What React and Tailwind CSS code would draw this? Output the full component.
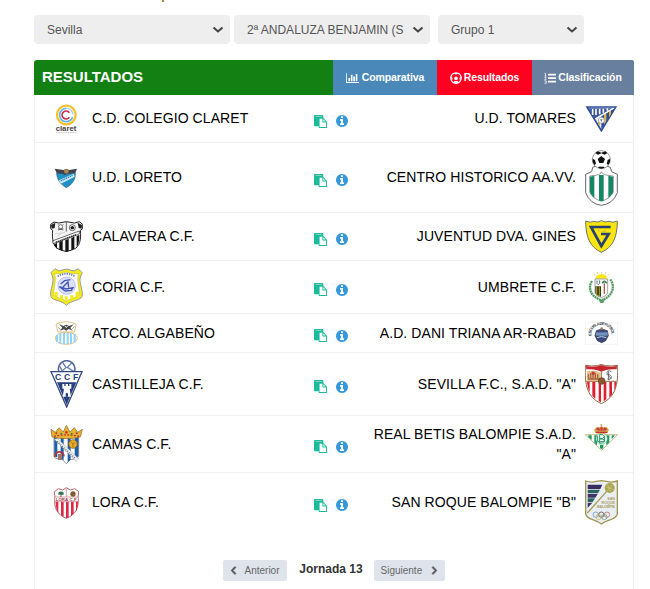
import React, { useState } from 'react';
import { FaChevronLeft, FaChevronRight } from 'react-icons/fa';

function Claret() {
  return (
    <svg width="33" height="30" viewBox="0 0 99 90">
      <g fill="none">
        <circle cx="49" cy="33" r="28" stroke="#f5c331" strokeWidth="7" />
        <path d="M49 13a20 20 0 1 0 19 26" stroke="#62b5e8" strokeWidth="5" />
        <path d="M49 13a20 20 0 0 1 20 18" stroke="#a8cfe8" strokeWidth="4" />
        <path d="M58 26a12 12 0 1 0 0 14" stroke="#c82f50" strokeWidth="5" />
      </g>
      <text x="17" y="80" fontSize="22" fontWeight="bold" fill="#4a3c42" textLength="62" lengthAdjust="spacingAndGlyphs" fontFamily="Liberation Sans">claret</text>
      <path d="M18 86h61" stroke="#aaa" strokeWidth="2" strokeDasharray="5 2" />
    </svg>
  );
}

function Loreto() {
  return (
    <svg width="33" height="20" viewBox="0 0 99 60">
      <path d="M20 15h56c1 20-9 34-27 44C31 49 20 33 20 15z" fill="#1e91c8" stroke="#356178" strokeWidth="2" />
      <path d="M14 2l27 4 8-4 8 4 24-4-5 13-24 3-7 4-7-4-18-3z" fill="#41434d" />
      <circle cx="49" cy="10" r="7" fill="#ab8554" />
      <path d="M27 37l44-20 3 9-42 21z" fill="#d4edf7" />
      <path d="M32 39l36-17" stroke="#2384b4" strokeWidth="4" strokeDasharray="4 2" />
    </svg>
  );
}

function Calavera() {
  return (
    <svg width="33" height="31" viewBox="0 0 99 93">
      <path d="M8 28l-6-5V10l10-7 14 3 23-4 24 4 15-4 10 8v13l-7 5c3 28-2 50-20 57l-22 7-22-7C10 78 5 55 8 28z" fill="#f5f5f5" stroke="#222" strokeWidth="3" />
      <path d="M3 12l13-7-2 16-9 2zM96 12L83 5l3 16 9 2z" fill="#222" />
      <path d="M49 3v29" stroke="#222" strokeWidth="2" />
      <path d="M9 59l79-29v9L9 68z" fill="#fff" stroke="#222" strokeWidth="2" />
      <path d="M18 64l61-23" stroke="#333" strokeWidth="5" strokeDasharray="4 2" />
      <path d="M13 69l8-3v17l-7-7zM28 63l10-4v31l-10-5zM46 57l10-3v36l-7 2-3-1zM64 51l9-4v36l-9 4zM80 45l8-3c0 18-2 29-8 36z" fill="#111" />
      <circle cx="67" cy="20" r="9" fill="#fff" stroke="#222" strokeWidth="2" />
      <path d="M67 14l6 5-2 6h-8l-2-6z" fill="#222" />
      <circle cx="32" cy="17" r="6" fill="#fff" stroke="#333" strokeWidth="2" />
      <path d="M24 10l3 3M40 10l-3 3M24 27l16-4M24 23l16 4" stroke="#555" strokeWidth="2.500" />
      <path d="M15 38l30-3M20 47l12-8" stroke="#bbb" strokeWidth="2" />
    </svg>
  );
}

function Coria() {
  return (
    <svg width="33" height="38" viewBox="0 0 99 114">
      <path d="M3 14L15 2l12 7 22-6 23 6 12-7 13 12-6 13c-5 18 10 41 5 58-4 13-31 10-47 27C34 95 6 99 3 85-2 67 13 45 8 27z" fill="#f2ec15" stroke="#9a9aa3" strokeWidth="3" />
      <path d="M14 17l13 1 22-5 23 5 13-1c-5 21 3 41 3 61-4 12-27 10-39 23C38 89 14 91 11 78c0-20 9-40 3-61z" fill="#fff" stroke="#b0aa60" strokeWidth="1.500" />
      <path d="M14 72h9v17l-9-6zM30 82h9v14l-9-4zM45 85h8v12l-4 3-4-3zM61 82h9v9l-9 4zM77 71h9v12l-9 5z" fill="#f2e915" />
      <circle cx="50" cy="53" r="26" fill="#dce3fa" stroke="#9da9e6" strokeWidth="2" />
      <path d="M28 56l21 7 20-4-5 8-18 2zM39 57l15-15 2 16M32 48l12-10 17-3" fill="none" stroke="#4454b6" strokeWidth="4" />
      <path d="M23 25q27-15 51 0" fill="none" stroke="#6573be" strokeWidth="5" strokeDasharray="4 3" />
    </svg>
  );
}

function Algabeno() {
  return (
    <svg width="33" height="24" viewBox="0 0 99 72">
      <path d="M18 10l13-5 18-3 18 3 12 5-6 23H24z" fill="#fff" stroke="#d8b268" strokeWidth="2.500" />
      <ellipse cx="49" cy="52" rx="33" ry="18" fill="#fff" stroke="#d8b268" strokeWidth="2.500" />
      <path d="M21 42v21M31 37v31M42 35v34M53 35v34M63 37v31M74 40v24" stroke="#8fd3f5" strokeWidth="6" />
      <path d="M27 9l13 6 9-4 8 4 14-5-10 10 7 9-12-5-7 5-7-4-13 4 8-9z" fill="#444" />
      <path d="M45 15l4 5 4-6" stroke="#eee" strokeWidth="3" fill="none" />
      <path d="M24 19l7 6M74 16l-8 8" stroke="#c9a38d" strokeWidth="3" />
    </svg>
  );
}

function Castilleja() {
  return (
    <svg width="33" height="48" viewBox="0 0 99 144">
      <circle cx="50" cy="27" r="25" fill="#fff" stroke="#55699c" strokeWidth="5" />
      <path d="M38 7l10 16-15 12M65 9L52 22l19 12M46 22h9M28 17l10 17" fill="none" stroke="#6c80ad" strokeWidth="4" />
      <path d="M3 35h93L50 141z" fill="#fff" stroke="#31477f" strokeWidth="4" />
      <path d="M21 67h58l-29 67z" fill="#263f7d" />
      <text x="15" y="61" fontSize="26" fontWeight="bold" fill="#263f7d" textLength="70" fontFamily="Liberation Sans">CCF</text>
      <path d="M37 72h6v6h4v-6h7v6h4v-6h6v14h-5l4 24H38l4-24h-5z" fill="#fff" />
      <path d="M47 110v-9q3-6 7 0v9z" fill="#263f7d" />
    </svg>
  );
}

function Camas() {
  return (
    <svg width="33" height="39" viewBox="0 0 99 117">
      <path d="M12 37h74v55c0 10-16 10-25 12l-12 12-12-12c-9-3-25-1-25-12z" fill="#fff" stroke="#555" strokeWidth="2" />
      <path d="M13 38h9v60l-9-6zM32 38h9v67l-9-3zM53 38h9v66l-9 7zM74 38h11v55q-3 6-11 7z" fill="#195fa9" />
      <path d="M13 43l9-3 64 61-8 8z" fill="#eee" stroke="#777" />
      <path d="M21 49l55 52" stroke="#777" strokeWidth="5" strokeDasharray="3 4" />
      <path d="M6 36L3 13l13 9 11-14 13 13 9-20 11 20L73 8l10 14 14-9-6 23q-41 10-85 0z" fill="#e5b333" stroke="#87621d" strokeWidth="2" />
      <path d="M12 34q37-9 76 0" fill="none" stroke="#bd3434" strokeWidth="4" strokeDasharray="6 4" />
      <circle cx="19" cy="25" r="3" fill="#c9302c" />
      <circle cx="49" cy="22" r="4" fill="#c9302c" />
      <circle cx="80" cy="25" r="3" fill="#c9302c" />
      <circle cx="34" cy="26" r="3" fill="#3a8a50" />
      <circle cx="65" cy="26" r="3" fill="#3a8a50" />
      <circle cx="69" cy="57" r="13" fill="#e9aa2a" stroke="#775519" strokeWidth="2" />
      <path d="M62 50l7 7 7-5M69 57v10" fill="none" stroke="#8d6118" strokeWidth="2" />
      <path d="M15 96c-1-19 26-21 27-2" fill="none" stroke="#bd2f3b" strokeWidth="5" />
      <path d="M24 87h12v18H24z" fill="#a07868" />
    </svg>
  );
}

function Lora() {
  return (
    <svg width="33" height="32" viewBox="0 0 99 96">
      <path d="M13 14l12-9 13 4 11-7 12 7 13-4 12 9-2 17c4 31-8 53-35 63C22 84 10 61 15 31z" fill="#fff" stroke="#b7686d" strokeWidth="3" />
      <path d="M17 43h8v34q-8-9-8-34zM33 43h8v47l-8-6zM48 43h8v48l-8 3zM63 43h8v37l-8 7zM78 43h6q0 22-6 30z" fill="#dc2945" />
      <path d="M14 30h71v14H14z" fill="#fff" stroke="#c47078" strokeWidth="2" />
      <text x="17" y="42" fontSize="13" fontWeight="bold" fill="#9c3444" textLength="65" fontFamily="Liberation Sans">LORA C.F.</text>
      <path d="M49 4v26" stroke="#c77b80" strokeWidth="2" />
      <path d="M25 17q8-7 16 0v6H25z" fill="#2c7652" />
      <path d="M33 20v10" stroke="#77543a" strokeWidth="3" />
      <circle cx="69" cy="21" r="8" fill="#835a30" />
    </svg>
  );
}

function Tomares() {
  return (
    <svg width="33" height="26" viewBox="0 0 99 78">
      <path d="M6 3h86L49 74z" fill="#e9edf4" stroke="#2d4b96" strokeWidth="5" />
      <path d="M89 6L61 52V24zM49 31l9-6v31l-9 14z" fill="#2f4b9b" />
      <path d="M72 16l6-4v12l-6 10zM58 26l6-4v23l-6 10zM39 39h6v22l-6-8z" fill="#dfb537" />
      <path d="M11 7h70L28 38z" fill="#3a559c" />
      <path d="M23 9v18M33 9v18M44 8v17M55 8v12M67 7v7" stroke="#fff" strokeWidth="5" />
      <path d="M30 39L88 6" stroke="#fff" strokeWidth="3" />
      <circle cx="49" cy="43" r="9" fill="#fff" stroke="#8192b3" strokeWidth="2" />
      <path d="M45 40h8l-4 8z" fill="#6175a2" />
    </svg>
  );
}

function CentroHistorico() {
  return (
    <svg width="33" height="56" viewBox="0 0 99 168">
      <path d="M2 73l18-8 3-13q26-13 53 0l4 13 17 8v55q-13 34-48 38Q15 162 2 128z" fill="#fff" stroke="#666" strokeWidth="3" />
      <path d="M14 78q36-2 35-13 3 11 36 13v48q-11 22-36 27-25-5-35-27z" fill="#fff" stroke="#666" strokeWidth="2" />
      <path d="M15 80l13-3v67q-9-7-13-17zM42 75h14v77l-7 2-7-2zM70 77l14 3v47q-4 10-14 17z" fill="#158764" />
      <circle cx="49" cy="29" r="27" fill="#fff" stroke="#666" strokeWidth="2" />
      <path d="M49 18l11 9-5 12H43l-5-12zM38 4l11 4 12-4 6 5-8 5-10-4-10 4-8-5zM23 26l7 4 3 11-5 4-5-9zM75 26l-7 4-3 11 5 4 5-9zM41 50h16l2 3-10 3-10-3z" fill="#111" />
    </svg>
  );
}

function Gines() {
  return (
    <svg width="33" height="33" viewBox="0 0 99 99">
      <path d="M2 3q14 7 24 1 13 5 23-2 10 7 23 2 11 6 25-1c0 50-14 79-48 94C15 81 2 52 2 3z" fill="#f9e50b" stroke="#6c7469" strokeWidth="3" />
      <path d="M77 21H18l31 57 22-36H48" fill="none" stroke="#2a426f" strokeWidth="8" />
      <path d="M41 35v-6M51 35h9v-6" stroke="#b6ad4d" strokeWidth="2" fill="none" />
    </svg>
  );
}

function Umbrete() {
  return (
    <svg width="33" height="31" viewBox="0 0 99 93">
      <path d="M31 20q2-13 19-14 15 1 17 14z" fill="#f8e616" />
      <path d="M30 11l-4-6M39 6l-2-6M50 4v-4M60 6l3-6M68 11l5-5" stroke="#e5bd49" strokeWidth="2" />
      <path d="M21 27C8 48 16 73 48 84M76 22C92 45 82 73 51 84M45 91l13-9M56 91L42 82" fill="none" stroke="#579b66" strokeWidth="7" strokeDasharray="6 1.500" />
      <path d="M30 21h38v43q-4 9-19 13-15-4-19-13z" fill="#fff" stroke="#777" strokeWidth="2" />
      <path d="M31 43h17v31q-17-4-17-13z" fill="#3c3b16" />
      <path d="M35 43v27M43 43v31" stroke="#ada629" strokeWidth="3" />
      <path d="M36 25v9q4 8 8 0v-9" fill="none" stroke="#557184" strokeWidth="3" />
      <path d="M58 34v31" stroke="#b35e42" strokeWidth="4" />
      <path d="M51 33l7-5 8 5" fill="none" stroke="#488352" strokeWidth="5" />
    </svg>
  );
}

function Triana() {
  return (
    <svg width="33" height="23" viewBox="0 0 99 69">
      <path d="M1 1h97v66H1z" fill="#fff" stroke="#eee" strokeWidth="2" />
      <path id="triana-arc" d="M20 41C12-2 86-2 79 41" fill="none" />
      <text fontSize="12" fontWeight="bold" fill="#333746" fontFamily="Liberation Sans">
        <textPath href="#triana-arc" textLength="98">ESCUELA DE FUTBOL</textPath>
      </text>
      <path d="M34 26l16-5 17 5 3 15-8 15-12 6-13-6-7-15z" fill="#3b4b7b" stroke="#262b3c" strokeWidth="2" />
      <path d="M33 31h35v10H33z" fill="#7293bd" />
      <path d="M36 47q14-7 28 0" fill="none" stroke="#b7c8e4" strokeWidth="3" />
      <circle cx="50" cy="20" r="4" fill="#9e8064" />
    </svg>
  );
}

function Sevilla() {
  return (
    <svg width="33" height="40" viewBox="0 0 99 120">
      <path d="M1 4l18 2 19-1 11-4 12 4 19 1 18-2c2 60-7 95-49 115C6 99-1 64 1 4z" fill="#fff" stroke="#8f6238" strokeWidth="3" />
      <path d="M3 6l17 2 18-1 11-4 12 4 19 1 16-2-1 10q-20-2-34 3l-12 4-12-4q-14-5-33-3z" fill="#c72430" />
      <path d="M49 20v33M3 52h91" stroke="#9c6b43" strokeWidth="3" />
      <path d="M6 22q20-4 33 1l8 3v25H7z" fill="#e6bc87" />
      <path d="M10 46V31M17 46V27M24 46V22M31 46V27M38 46V31M9 45h35" fill="none" stroke="#a8613e" strokeWidth="4" />
      <path d="M20 24h9v8h-9z" fill="#c23c3c" />
      <path d="M6 54h8v31q-6-11-8-31zM22 54h9v51l-9-10zM41 54h7v61l-7-4zM56 54h8v52l-8 6zM73 54h8v38l-8 8zM88 54h6q-1 16-6 25z" fill="#df1f30" />
      <path d="M79 23c-14-9-17 6-7 9 13 4 7 17-5 13M71 22v27M64 29l15 15" fill="none" stroke="#555" strokeWidth="2.500" />
      <circle cx="50" cy="51" r="10" fill="#8f5830" stroke="#5b3b27" strokeWidth="2" />
    </svg>
  );
}

function Betis() {
  return (
    <svg width="33" height="27" viewBox="0 0 99 81">
      <path d="M1 32h97L50 79z" fill="#fff" stroke="#beaf68" strokeWidth="2.500" />
      <path d="M10 34h10v14L10 39zM28 34h8v30l-8-8zM64 34h9v21l-9 9zM80 34h10l-10 12zM45 63h10v9l-5 4-5-4z" fill="#199a63" />
      <circle cx="50" cy="44" r="17" fill="#fff" stroke="#66ad85" strokeWidth="2" />
      <path d="M44 31v27M44 32h9q9 5 0 12h-9M44 45h10q9 6-2 12h-8M38 36v17h21V35" fill="none" stroke="#239b67" strokeWidth="3" />
      <path d="M31 27l-4-10 8-8 10 1 4-4 5 4 11-1 7 8-5 10q-17 6-36 0z" fill="#d4aa47" />
      <path d="M33 18q3-11 10-6l2 8M66 18q-3-11-10-6l-2 8M46 10h7v10h-7z" fill="#c93745" />
      <path d="M33 25h34" stroke="#bb3540" strokeWidth="4" />
      <path d="M49 0v8M46 3h7" stroke="#bb8b48" strokeWidth="2" />
    </svg>
  );
}

function SanRoque() {
  return (
    <svg width="33" height="45" viewBox="0 0 99 135">
      <path d="M2 3q16 6 32 1l15-2 16 2q15 5 32-1v98c0 17-32 19-48 31C32 118 2 117 2 101z" fill="#e8eef2" stroke="#a29653" strokeWidth="4" />
      <path d="M8 14h44l-6 13H8z" fill="#382d63" />
      <path d="M8 29h37l-6 11H8z" fill="#2f635f" />
      <path d="M8 42h30l-7 11H8z" fill="#3c3567" />
      <path d="M8 55h22l-7 11H8z" fill="#2f635f" />
      <path d="M8 68h14L8 84z" fill="#3c3567" />
      <path d="M7 99l60-67" stroke="#aa9b55" strokeWidth="4" />
      <circle cx="74" cy="24" r="15" fill="#aaa34f" />
      <path d="M62 20l24 9M67 12l11 25M83 14L65 34" stroke="#d0cb86" strokeWidth="2" />
      <g fill="#b09d60" fontFamily="Liberation Sans" fontSize="11" fontWeight="bold" textAnchor="end">
        <text x="90" y="61">SAN</text>
        <text x="90" y="72">ROQUE</text>
        <text x="90" y="83" textLength="54">BALOMPIE</text>
      </g>
      <g fill="none" strokeWidth="2.500">
        <circle cx="32" cy="104" r="8" stroke="#6c9bc2" />
        <circle cx="49" cy="104" r="8" stroke="#555" />
        <circle cx="66" cy="104" r="8" stroke="#c77474" />
        <circle cx="41" cy="111" r="8" stroke="#cfb663" />
        <circle cx="58" cy="111" r="8" stroke="#78a681" />
      </g>
    </svg>
  );
}

const matches = [
  { home: 'C.D. COLEGIO CLARET', away: 'U.D. TOMARES', homeLogo: <Claret />, awayLogo: <Tomares />, height: 'h-12' },
  { home: 'U.D. LORETO', away: 'CENTRO HISTORICO AA.VV.', homeLogo: <Loreto />, awayLogo: <CentroHistorico />, height: 'h-[70px]' },
  { home: 'CALAVERA C.F.', away: 'JUVENTUD DVA. GINES', homeLogo: <Calavera />, awayLogo: <Gines />, height: 'h-12' },
  { home: 'CORIA C.F.', away: 'UMBRETE C.F.', homeLogo: <Coria />, awayLogo: <Umbrete />, height: 'h-[53px]' },
  { home: 'ATCO. ALGABEÑO', away: 'A.D. DANI TRIANA AR-RABAD', homeLogo: <Algabeno />, awayLogo: <Triana />, height: 'h-[39px]' },
  { home: 'CASTILLEJA C.F.', away: 'SEVILLA F.C., S.A.D. "A"', homeLogo: <Castilleja />, awayLogo: <Sevilla />, height: 'h-[63px]' },
  { home: 'CAMAS C.F.', away: 'REAL BETIS BALOMPIE S.A.D. "A"', homeLogo: <Camas />, awayLogo: <Betis />, height: 'h-[57px]', top: true },
  { home: 'LORA C.F.', away: 'SAN ROQUE BALOMPIE "B"', homeLogo: <Lora />, awayLogo: <SanRoque />, height: 'h-[59px]' },
];

function ChartIcon() {
  return (
    <svg width="13" height="12" viewBox="0 0 2048 1792" fill="currentColor">
      <path d="M640 896v512h-256v-512h256zm384-512v1024h-256v-1024h256zm1024 1152v128h-2048v-1536h128v1408h1920zm-640-896v768h-256v-768h256zm384-384v1152h-256v-1152h256z" />
    </svg>
  );
}

function BallIcon() {
  return (
    <svg width="12" height="12" viewBox="0 0 24 24" fill="none">
      <circle cx="12" cy="12" r="10.500" stroke="currentColor" strokeWidth="2.500" />
      <path d="M12 8.500l4 3-1.500 4.500h-5L8 11.500zM7 2l5 3.500L17 2zM1 9l4.500 3L4 17zM23 9l-4.500 3 1.500 5zM7 21l2-3h6l2 3-5 2z" fill="currentColor" />
    </svg>
  );
}

function ListIcon() {
  return (
    <svg width="12" height="12" viewBox="0 0 24 24" fill="none" stroke="currentColor">
      <path d="M8 5h16M8 12h16M8 19h16" strokeWidth="3.500" />
      <path d="M1 2.500h2v6M1 8h4M1 11h3v2l-3 2.500h4M1 18h3.500v4.500H1" strokeWidth="1.500" />
    </svg>
  );
}

function PasteIcon() {
  return (
    <svg width="13" height="13" viewBox="0 0 1792 1792" fill="#1abc9c">
      <path d="M256 128h768v128H256z" fill="#a9cfc0" />
      <path d="M768 1664h896v-640h-416q-40 0-68-28t-28-68v-416h-384v1152z" fill="#fff" />
      <path d="M768 1664h896v-640h-416q-40 0-68-28t-28-68v-416h-384v1152zm256-1440v-64q0-13-9.500-22.500t-22.500-9.500h-704q-13 0-22.500 9.500t-9.500 22.500v64q0 13 9.500 22.500t22.500 9.500h704q13 0 22.500-9.500t9.500-22.500zm256 672h299l-299-299v299zm512 128v672q0 40-28 68t-68 28h-960q-40 0-68-28t-28-68v-160h-544q-40 0-68-28t-28-68v-1344q0-40 28-68t68-28h1088q40 0 68 28t28 68v328q21 13 36 28l408 408q28 28 48 76t20 88z" />
    </svg>
  );
}

function InfoIcon() {
  return (
    <svg width="14" height="14" viewBox="0 0 1792 1792" fill="#3498db">
      <path d="M1152 1376v-160q0-14-9-23t-23-9h-96v-512q0-14-9-23t-23-9h-320q-14 0-23 9t-9 23v160q0 14 9 23t23 9h96v320h-96q-14 0-23 9t-9 23v160q0 14 9 23t23 9h448q14 0 23-9t9-23zm-128-896v-160q0-14-9-23t-23-9h-192q-14 0-23 9t-9 23v160q0 14 9 23t23 9h192q14 0 23-9t9-23zm640 416q0 209-103 385.500t-279.500 279.500-385.500 103-385.500-103-279.500-279.500-103-385.500 103-385.500 279.500-279.500 385.500-103 385.500 103 279.500 279.500 103 385.500z" />
    </svg>
  );
}

function Filter({ label, className }) {
  return (
    <button className={`flex h-[29px] items-center justify-between rounded bg-[#eeeeee] pl-[13px] pr-[6px] text-[12px] text-[#555] ${className}`}>
      <span className="whitespace-nowrap">{label}</span>
      <svg width="12" height="8" viewBox="0 0 12 8" fill="none" className="shrink-0">
        <path d="M1.500 1.500L6 5.500l4.500-4" stroke="#444" strokeWidth="2" />
      </svg>
    </button>
  );
}

function MatchRow({ match, last }) {
  return (
    <div className={`flex items-center ${match.height} ${last ? '' : 'border-b border-[#f0f0f0]'}`}>
      <div className="ml-[15px] w-[33px] shrink-0">{match.homeLogo}</div>
      <span className="ml-[9px] w-[222px] shrink-0 pb-px tracking-[0.08px]">{match.home}</span>
      <div className="flex w-[35px] shrink-0 items-center justify-between pt-[5px]">
        <PasteIcon />
        <InfoIcon />
      </div>
      <span className="ml-[17px] w-[210px] shrink-0 pb-px text-right tracking-[0.08px]">{match.away}</span>
      <div className={`ml-[9px] w-[33px] shrink-0 ${match.top ? 'self-start pt-2' : ''}`}>{match.awayLogo}</div>
    </div>
  );
}

export default function App() {
  const [jornada, setJornada] = useState(13);

  return (
    <div className="h-[589px] w-[650px] overflow-hidden bg-white font-['Liberation_Sans',Arial,sans-serif]">
      <div className="h-[15px] pl-[162px]">
        <div className="h-[2px] w-[2px] bg-[#b97f45]" />
      </div>

      <div className="flex pl-[34px]">
        <Filter label="Sevilla" className="w-[196px]" />
        <Filter label="2ª ANDALUZA BENJAMIN (S" className="ml-1 w-[196px]" />
        <Filter label="Grupo 1" className="ml-2 w-[146px]" />
      </div>

      <div className="ml-[34px] mt-4 w-[600px]">
        {/* Header + tabs */}
        <div className="flex h-[35px] overflow-hidden rounded-t-[3px] bg-[#128012] text-white">
          <h1 className="flex w-[299px] items-center pl-2 text-[15px] font-bold">RESULTADOS</h1>
          <div className="flex pt-px text-[10.5px] font-bold tracking-[-0.1px]">
            <button className="-mt-px flex w-[104px] items-center justify-center gap-[3px] bg-[#4b88ba] pt-px">
              <ChartIcon /> Comparativa
            </button>
            <button className="-mt-px flex w-[95px] items-center justify-center gap-[2px] bg-[#ff0021] pt-px">
              <BallIcon /> Resultados
            </button>
            <button className="-mt-px flex w-[102px] items-center justify-center gap-[2px] bg-[#687fa0] pt-px">
              <ListIcon /> Clasificación
            </button>
          </div>
        </div>

        {/* Matches */}
        <div className="h-[494px] border-x border-[#eee] text-[14px] leading-[20px] text-black">
          {matches.map((match, i) => (
            <MatchRow key={match.home} match={match} last={i === matches.length - 1} />
          ))}

          <div className="flex items-start justify-center pt-[28px] pr-px">
            <button onClick={() => setJornada(jornada - 1)} className="flex h-[21px] w-16 items-center rounded-[2px] bg-[#dfe4ec] pl-[6px] text-[10px] text-[#666]">
              <FaChevronLeft size={9} color="#555" stroke="#555" strokeWidth={40} />
              <span className="ml-[7px]">Anterior</span>
            </button>
            <span className="w-[87px] pl-[2px] pt-px text-center text-[12px] font-bold leading-[17px] text-[#333]">Jornada {jornada}</span>
            <button onClick={() => setJornada(jornada + 1)} className="flex h-[21px] w-[71px] items-center rounded-[2px] bg-[#dfe4ec] pl-[7px] text-[10px] text-[#666]">
              <span className="mr-[8px]">Siguiente</span>
              <FaChevronRight size={9} color="#555" stroke="#555" strokeWidth={40} />
            </button>
          </div>
        </div>
      </div>
    </div>
  );
}
